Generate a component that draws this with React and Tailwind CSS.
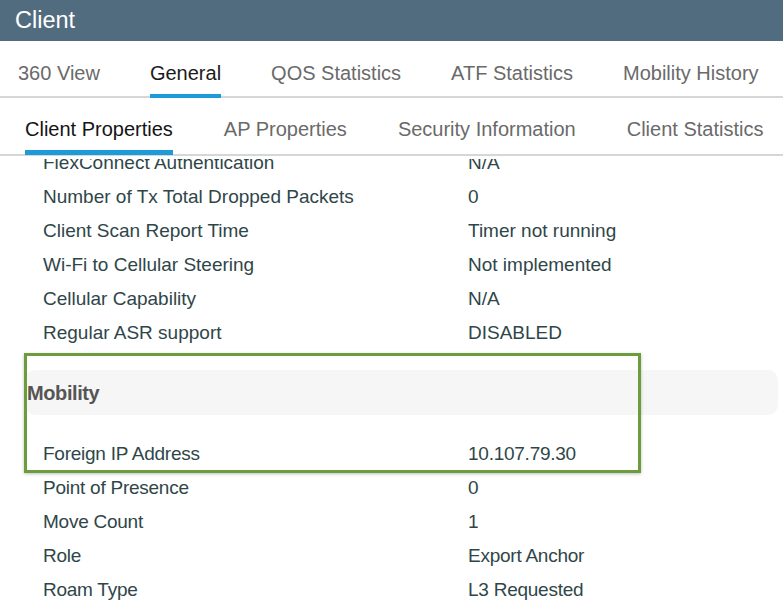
import { useState } from 'react'

const TOP_TABS = ['360 View', 'General', 'QOS Statistics', 'ATF Statistics', 'Mobility History']
const SUB_TABS = ['Client Properties', 'AP Properties', 'Security Information', 'Client Statistics']

const GENERAL_ROWS = [
  ['FlexConnect Authentication', 'N/A'],
  ['Number of Tx Total Dropped Packets', '0'],
  ['Client Scan Report Time', 'Timer not running'],
  ['Wi-Fi to Cellular Steering', 'Not implemented'],
  ['Cellular Capability', 'N/A'],
  ['Regular ASR support', 'DISABLED'],
]

const MOBILITY_ROWS = [
  ['Foreign IP Address', '10.107.79.30'],
  ['Point of Presence', '0'],
  ['Move Count', '1'],
  ['Role', 'Export Anchor'],
  ['Roam Type', 'L3 Requested'],
]

function Row({ label, value, narrow }) {
  return (
    <div className={`flex h-[34px] items-center text-[19px] text-[#2f4649] ${narrow ? 'tracking-[-0.25px]' : ''}`}>
      <span className="w-[468px] shrink-0 pl-[43px]">{label}</span>
      <span>{value}</span>
    </div>
  )
}

export default function App() {
  const [tab, setTab] = useState('General')
  const [subTab, setSubTab] = useState('Client Properties')

  return (
    <div className="h-[611px] w-[783px] overflow-hidden bg-white font-['Liberation_Sans',Arial,sans-serif]">
      {/* Title bar */}
      <div className="flex h-[41px] items-center bg-[#526c7f] pl-[15px] text-[23.5px] text-white">Client</div>

      {/* Main tabs */}
      <div className="flex h-[57px] items-end gap-[40px] border-b-2 border-[#d6d6d6] pl-[13px]">
        {TOP_TABS.map(t => (
          <button
            key={t}
            onClick={() => setTab(t)}
            className={`flex h-[42px] flex-col justify-between px-[5px] text-[20px] leading-none whitespace-nowrap
              ${tab === t ? 'text-[#1b1b1b]' : 'text-[#6a6a6a]'}`}
          >
            <span className="pt-[9px]">{t}</span>
            <span className={`-mb-[2px] h-[4px] w-full ${tab === t ? 'bg-[#1d9bd8]' : ''}`} />
          </button>
        ))}
      </div>

      {/* Sub tabs */}
      <div className="flex h-[58px] items-end gap-[41px] border-b-2 border-[#d6d6d6] pl-[20px]">
        {SUB_TABS.map(t => (
          <button
            key={t}
            onClick={() => setSubTab(t)}
            className={`flex h-[45px] flex-col justify-between px-[5px] text-[20px] leading-none whitespace-nowrap
              ${subTab === t ? 'text-[#141414]' : 'text-[#6a6a6a]'}`}
          >
            <span className="pt-[10px]">{t}</span>
            <span className={`-mb-[1px] h-[5px] w-full ${subTab === t ? 'bg-[#1d9bd8]' : ''}`} />
          </button>
        ))}
      </div>

      {/* Properties list, scrolled */}
      <div className="relative mt-[3px] h-[452px] overflow-hidden">
        <div className="-mt-[13px]">
          {GENERAL_ROWS.map(([l, v]) => <Row key={l} label={l} value={v} />)}

          <div className="pt-[20px] pb-[22px] pl-[25px] pr-[5px]">
            <div className="flex h-[45px] items-center rounded-[10px] bg-[#f6f6f6] pl-[2px] text-[20px] font-bold tracking-[-0.4px] text-[#555555]">
              Mobility
            </div>
          </div>

          {MOBILITY_ROWS.map(([l, v]) => <Row key={l} label={l} value={v} narrow />)}
        </div>

        {/* highlight annotation */}
        <div className="absolute left-[24px] top-[194px] h-[120px] w-[617px] border-[3px] border-[#6b9c3e] shadow-[0_1px_3px_rgba(0,0,0,0.25)]" />
      </div>
    </div>
  )
}
